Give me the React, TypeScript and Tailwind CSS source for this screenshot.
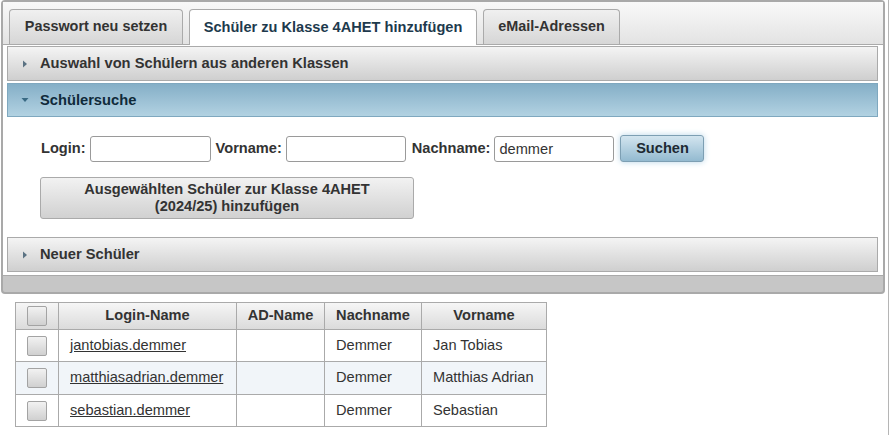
import { useState } from "react";

const font = { fontFamily: '"Liberation Sans", Arial, sans-serif' };

type Student = { login: string; ad: string; nachname: string; vorname: string };

const students: Student[] = [
  { login: "jantobias.demmer", ad: "", nachname: "Demmer", vorname: "Jan Tobias" },
  { login: "matthiasadrian.demmer", ad: "", nachname: "Demmer", vorname: "Matthias Adrian" },
  { login: "sebastian.demmer", ad: "", nachname: "Demmer", vorname: "Sebastian" },
];

function Arrow({ open }: { open?: boolean }) {
  return open ? (
    <svg width="10" height="10" viewBox="0 0 10 10" className="mr-[10px]">
      <path d="M1.5 3 L8.5 3 L5 7 Z" fill="#3a6a84" />
    </svg>
  ) : (
    <svg width="10" height="10" viewBox="0 0 10 10" className="mr-[10px]">
      <path d="M3 1.5 L7 5 L3 8.5 Z" fill="#5b7283" />
    </svg>
  );
}

function AccHeader({ title, open }: { title: string; open?: boolean }) {
  return (
    <div
      className={
        open
          ? "flex items-center h-[34px] pl-[12px] border border-[#7fa8bf] bg-gradient-to-b from-[#85afc7] to-[#b2d2e2] text-[#0f2a3a] font-bold text-[14.7px]"
          : "flex items-center h-[35px] pl-[12px] border border-[#aaaaaa] bg-gradient-to-b from-[#f4f4f4] to-[#cfcfcf] text-[#333] font-bold text-[14.7px]"
      }
    >
      <Arrow open={open} />
      {title}
    </div>
  );
}

function Tab({ label, width, active }: { label: string; width: string; active?: boolean }) {
  return (
    <div
      className={
        active
          ? `${width} h-[36px] -mb-px flex items-center justify-center border border-b-0 border-[#aaaaaa] rounded-t-[4px] bg-white text-[#1e3a4d] font-bold text-[14.6px] relative z-10`
          : `${width} h-[35px] flex items-center justify-center border border-b-0 border-[#aaaaaa] rounded-t-[4px] bg-gradient-to-b from-[#f0f0f0] to-[#d6d6d6] text-[#333] font-bold text-[14.4px]`
      }
    >
      {label}
    </div>
  );
}

function Box() {
  return (
    <span className="block w-[20px] h-[20px] border border-[#a3a3a3] rounded-[2px] bg-gradient-to-b from-[#f2f2f2] to-[#d0d0d0]" />
  );
}

export default function App() {
  const [nachname, setNachname] = useState("demmer");

  return (
    <div className="w-[889px] h-[435px] bg-white border-r border-[#b5b5b5] overflow-hidden" style={font}>
      <div className="ml-[1px] w-[884px] border-2 border-[#a9a9a9] rounded-[4px] bg-[#c6c6c6]">
        <div className="flex items-end gap-[6px] pl-[6px] pt-[7px] bg-gradient-to-b from-[#f9f9f9] to-[#e3e3e3]">
          <Tab label="Passwort neu setzen" width="w-[174px]" />
          <Tab label="Schüler zu Klasse 4AHET hinzufügen" width="w-[288px]" active />
          <Tab label="eMail-Adressen" width="w-[137px]" />
        </div>
        <div className="bg-white border-y border-[#aaaaaa] pl-[4px] pr-[5px] pt-[1px] pb-[3px]">
          <AccHeader title="Auswahl von Schülern aus anderen Klassen" />
          <div className="mt-[2px]">
            <AccHeader title="Schülersuche" open />
          </div>
          <div className="pl-[34px] pt-[18px] pb-[18px]">
            <div className="flex items-center text-[14.6px] text-[#333] font-bold">
              <span className="mr-[4px]">Login:</span>
              <input className="w-[121px] h-[26px] border border-[#9a9a9a] rounded-[3px] px-[4px] font-normal outline-none" />
              <span className="ml-[5px] mr-[4px]">Vorname:</span>
              <input className="w-[120px] h-[26px] border border-[#9a9a9a] rounded-[3px] px-[4px] font-normal outline-none" />
              <span className="ml-[6px] mr-[4px]">Nachname:</span>
              <input
                value={nachname}
                onChange={(e) => setNachname(e.target.value)}
                className="w-[120px] h-[26px] border border-[#9a9a9a] rounded-[3px] px-[4px] font-normal text-[14.6px] text-[#333] outline-none"
              />
              <button className="ml-[6px] w-[84px] h-[27px] border border-[#7d9fb3] rounded-[3px] bg-gradient-to-b from-[#d3e5ef] to-[#93bad0] text-[#1d2a33] font-bold text-[14.6px] shadow-[0_0_6px_#b8d6e8]">
                Suchen
              </button>
            </div>
            <button className="mt-[15px] -ml-px w-[374px] h-[42px] border border-[#aaaaaa] rounded-[3px] bg-gradient-to-b from-[#f2f2f2] to-[#d1d1d1] text-[#333] font-bold text-[14.6px] leading-[17px]">
              Ausgewählten Schüler zur Klasse 4AHET
              <br />
              (2024/25) hinzufügen
            </button>
          </div>
          <AccHeader title="Neuer Schüler" />
        </div>
        <div className="h-[16px]" />
      </div>

      <table className="ml-[15px] mt-[8px] border-collapse text-[14.6px] text-[#333]">
        <thead>
          <tr className="h-[27px] bg-gradient-to-b from-[#f6f6f6] to-[#dadada]">
            <th className="w-[43px] border border-[#aaaaaa] p-0">
              <div className="flex justify-center">
                <Box />
              </div>
            </th>
            <th className="w-[178px] border border-[#aaaaaa] font-bold">Login-Name</th>
            <th className="w-[88px] border border-[#aaaaaa] font-bold">AD-Name</th>
            <th className="w-[97px] border border-[#aaaaaa] font-bold">Nachname</th>
            <th className="w-[125px] border border-[#aaaaaa] font-bold">Vorname</th>
          </tr>
        </thead>
        <tbody>
          {students.map((s, i) => (
            <tr key={s.login} className={i === 1 ? "h-[33px] bg-[#f1f5f9]" : "h-[32px] bg-white"}>
              <td className="border border-[#aaaaaa] p-0">
                <div className="flex justify-center">
                  <Box />
                </div>
              </td>
              <td className="border border-[#aaaaaa] px-[11px]">
                <a href="#" className="underline text-[#333]">
                  {s.login}
                </a>
              </td>
              <td className="border border-[#aaaaaa] px-[11px]">{s.ad}</td>
              <td className="border border-[#aaaaaa] px-[11px]">{s.nachname}</td>
              <td className="border border-[#aaaaaa] px-[11px]">{s.vorname}</td>
            </tr>
          ))}
        </tbody>
      </table>
    </div>
  );
}
